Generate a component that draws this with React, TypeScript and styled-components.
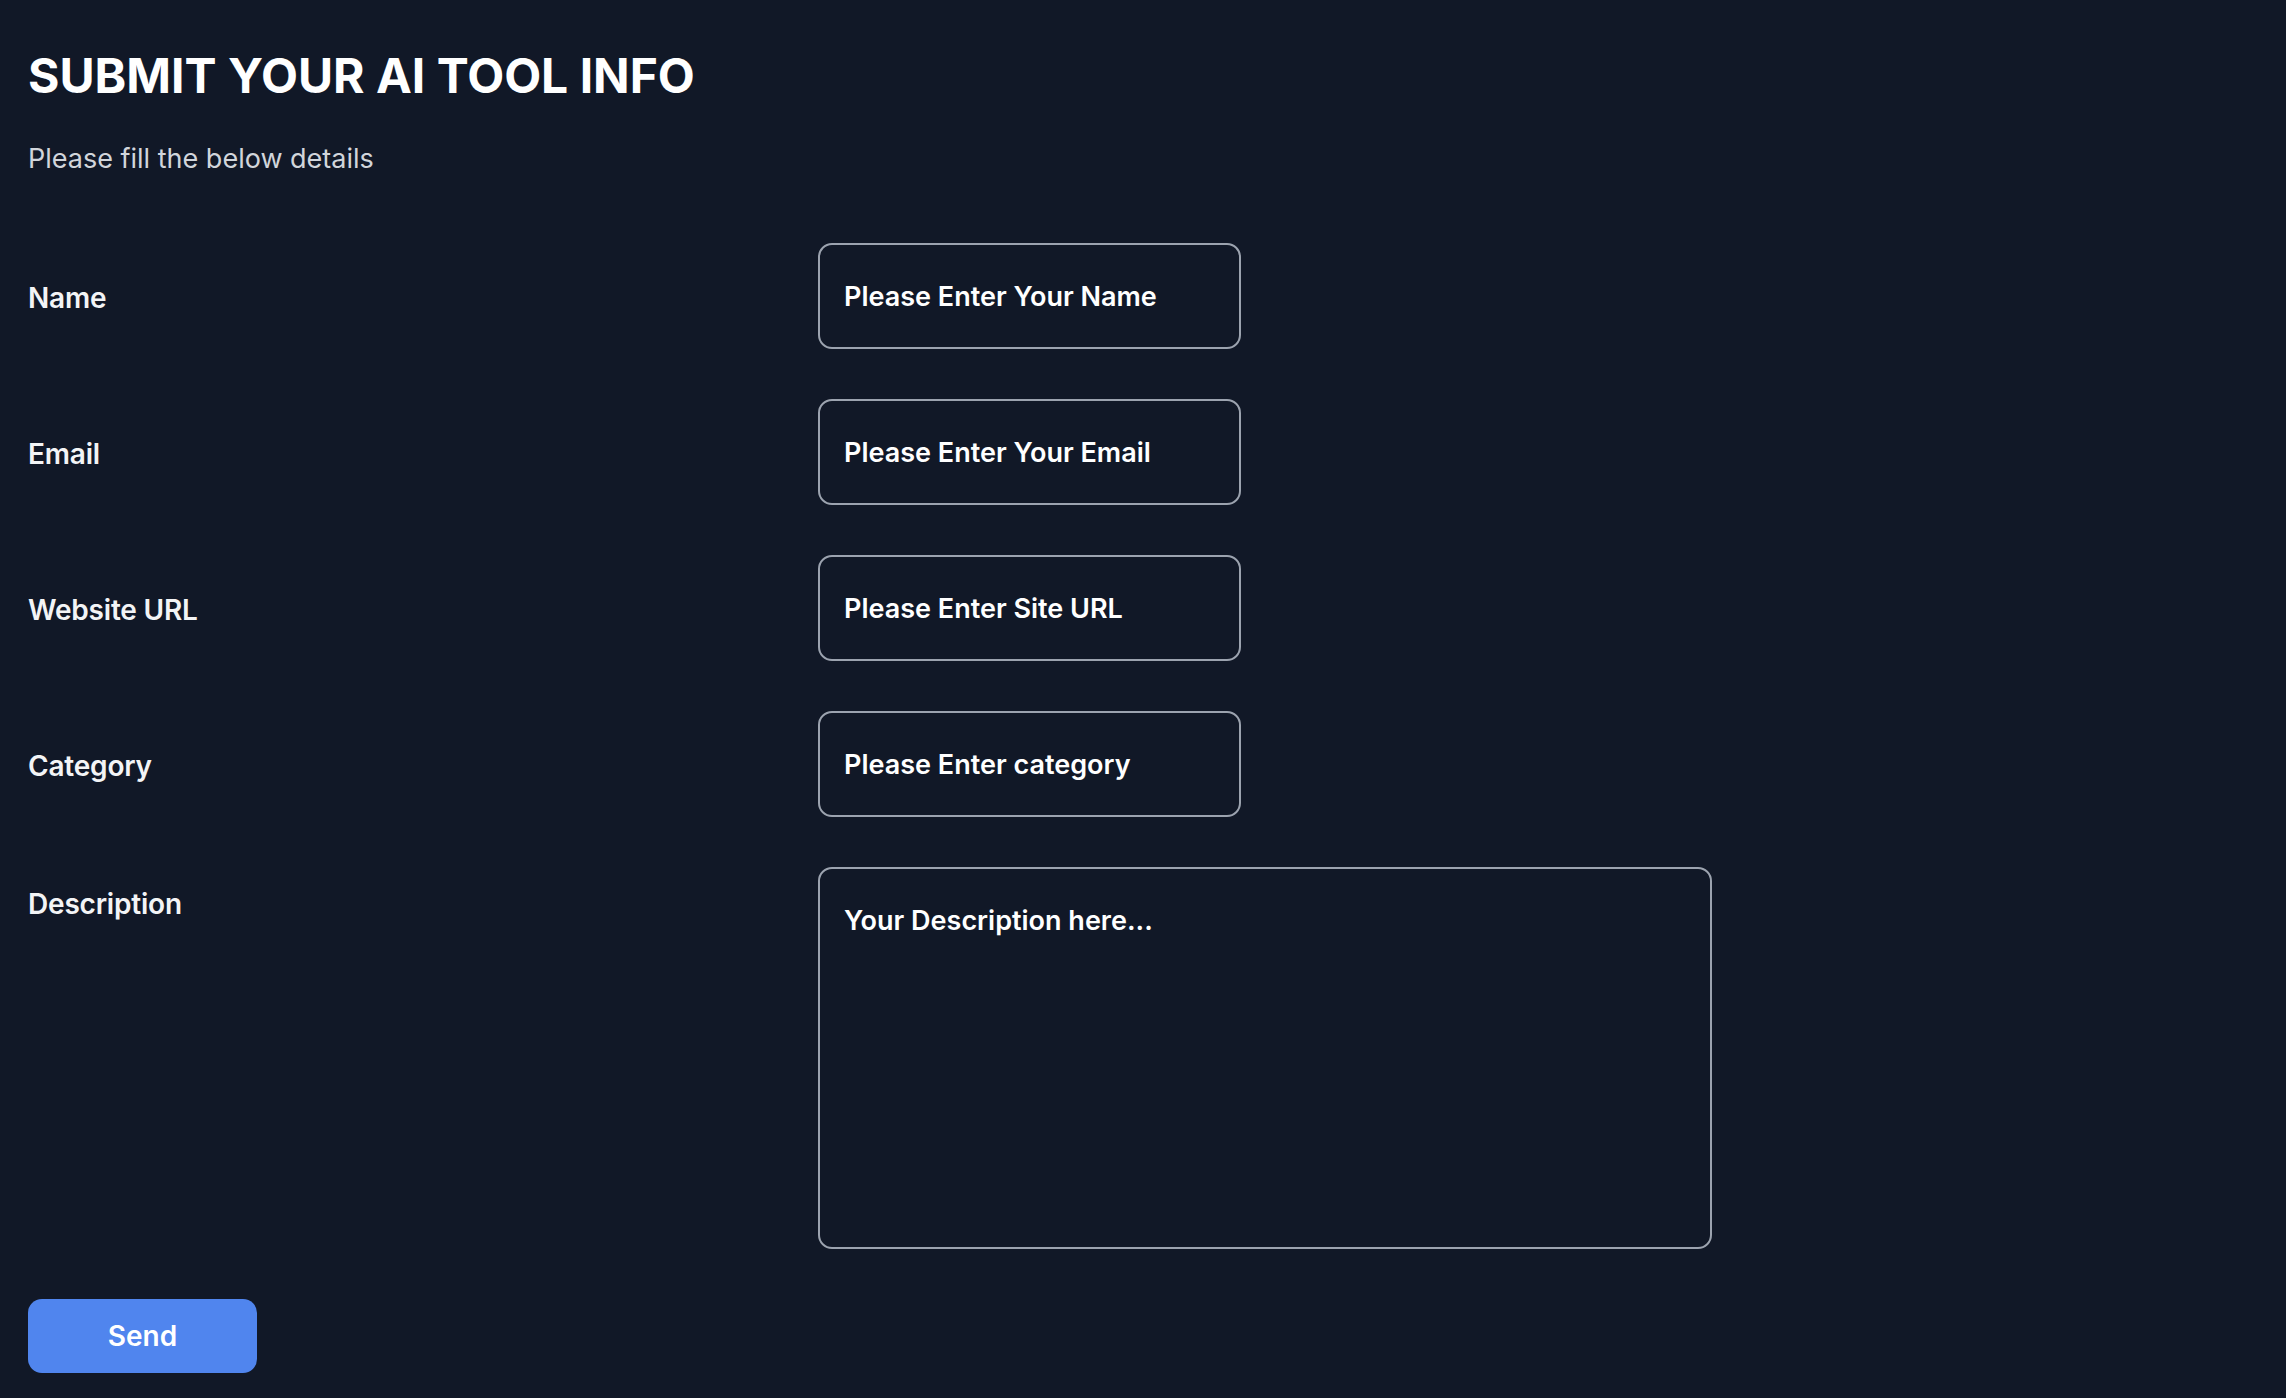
import React from "react";
import styled, { createGlobalStyle } from "styled-components";

const GlobalStyle = createGlobalStyle`
  * { box-sizing: border-box; }
  html, body {
    margin: 0;
    padding: 0;
    background: #111827;
    min-height: 100%;
  }
  body {
    font-family: Inter, "Noto Sans", "Liberation Sans", sans-serif;
    color: #ffffff;
  }
`;

const Page = styled.main`
  min-height: 1398px;
  padding: 47px 28px 24px 28px;
  background: #111827;
`;

const Title = styled.h1`
  margin: 0;
  font-size: 48px;
  line-height: 58px;
  font-weight: 700;
  color: #ffffff;
  letter-spacing: 0;
`;

const Subtitle = styled.p`
  margin: 37px 0 0 0;
  font-size: 27px;
  line-height: 34px;
  font-weight: 400;
  color: #d1d5db;
`;

const Form = styled.form`
  margin-top: 67px;
  display: flex;
  flex-direction: column;
  gap: 50px;
`;

const FieldRow = styled.div<{ $alignTop?: boolean }>`
  display: grid;
  grid-template-columns: 790px 1fr;
  align-items: ${(p) => (p.$alignTop ? "start" : "center")};
`;

const Label = styled.label<{ $offset?: number }>`
  font-size: 28px;
  line-height: 34px;
  font-weight: 600;
  letter-spacing: -0.2px;
  color: #f3f4f6;
  padding-top: ${(p) => p.$offset ?? 0}px;
  margin-top: ${(p) => (p.$offset ? 0 : 4)}px;
`;

const fieldText = `
  font-family: Inter, "Noto Sans", "Liberation Sans", sans-serif;
  font-size: 27px;
  font-weight: 600;
  color: #ffffff;
  background: transparent;
  border: 2px solid #9ca3af;
  border-radius: 14px;
  outline: none;
  &::placeholder {
    color: #ffffff;
    opacity: 1;
  }
`;

const TextInput = styled.input`
  ${fieldText}
  width: 423px;
  height: 106px;
  padding: 0 24px;
`;

const TextArea = styled.textarea`
  ${fieldText}
  width: 894px;
  height: 382px;
  padding: 35px 24px;
  line-height: 34px;
  resize: none;
  display: block;
`;

const SendButton = styled.button`
  margin-top: 50px;
  width: 229px;
  height: 74px;
  border: none;
  border-radius: 14px;
  background: #5085ee;
  color: #ffffff;
  font-family: Inter, "Noto Sans", "Liberation Sans", sans-serif;
  font-size: 28px;
  font-weight: 600;
  cursor: pointer;
`;

const fields = [
  { id: "name", label: "Name", placeholder: "Please Enter Your Name" },
  { id: "email", label: "Email", placeholder: "Please Enter Your Email" },
  { id: "url", label: "Website URL", placeholder: "Please Enter Site URL" },
  { id: "category", label: "Category", placeholder: "Please Enter category" },
];

export default function App() {
  return (
    <>
      <GlobalStyle />
      <Page>
        <Title>SUBMIT YOUR AI TOOL INFO</Title>
        <Subtitle>Please fill the below details</Subtitle>
        <Form onSubmit={(e) => e.preventDefault()}>
          {fields.map((f) => (
            <FieldRow key={f.id}>
              <Label htmlFor={f.id}>{f.label}</Label>
              <TextInput id={f.id} type="text" placeholder={f.placeholder} />
            </FieldRow>
          ))}
          <FieldRow $alignTop>
            <Label htmlFor="description" $offset={20}>
              Description
            </Label>
            <TextArea id="description" placeholder="Your Description here..." />
          </FieldRow>
        </Form>
        <SendButton type="submit">Send</SendButton>
      </Page>
    </>
  );
}
